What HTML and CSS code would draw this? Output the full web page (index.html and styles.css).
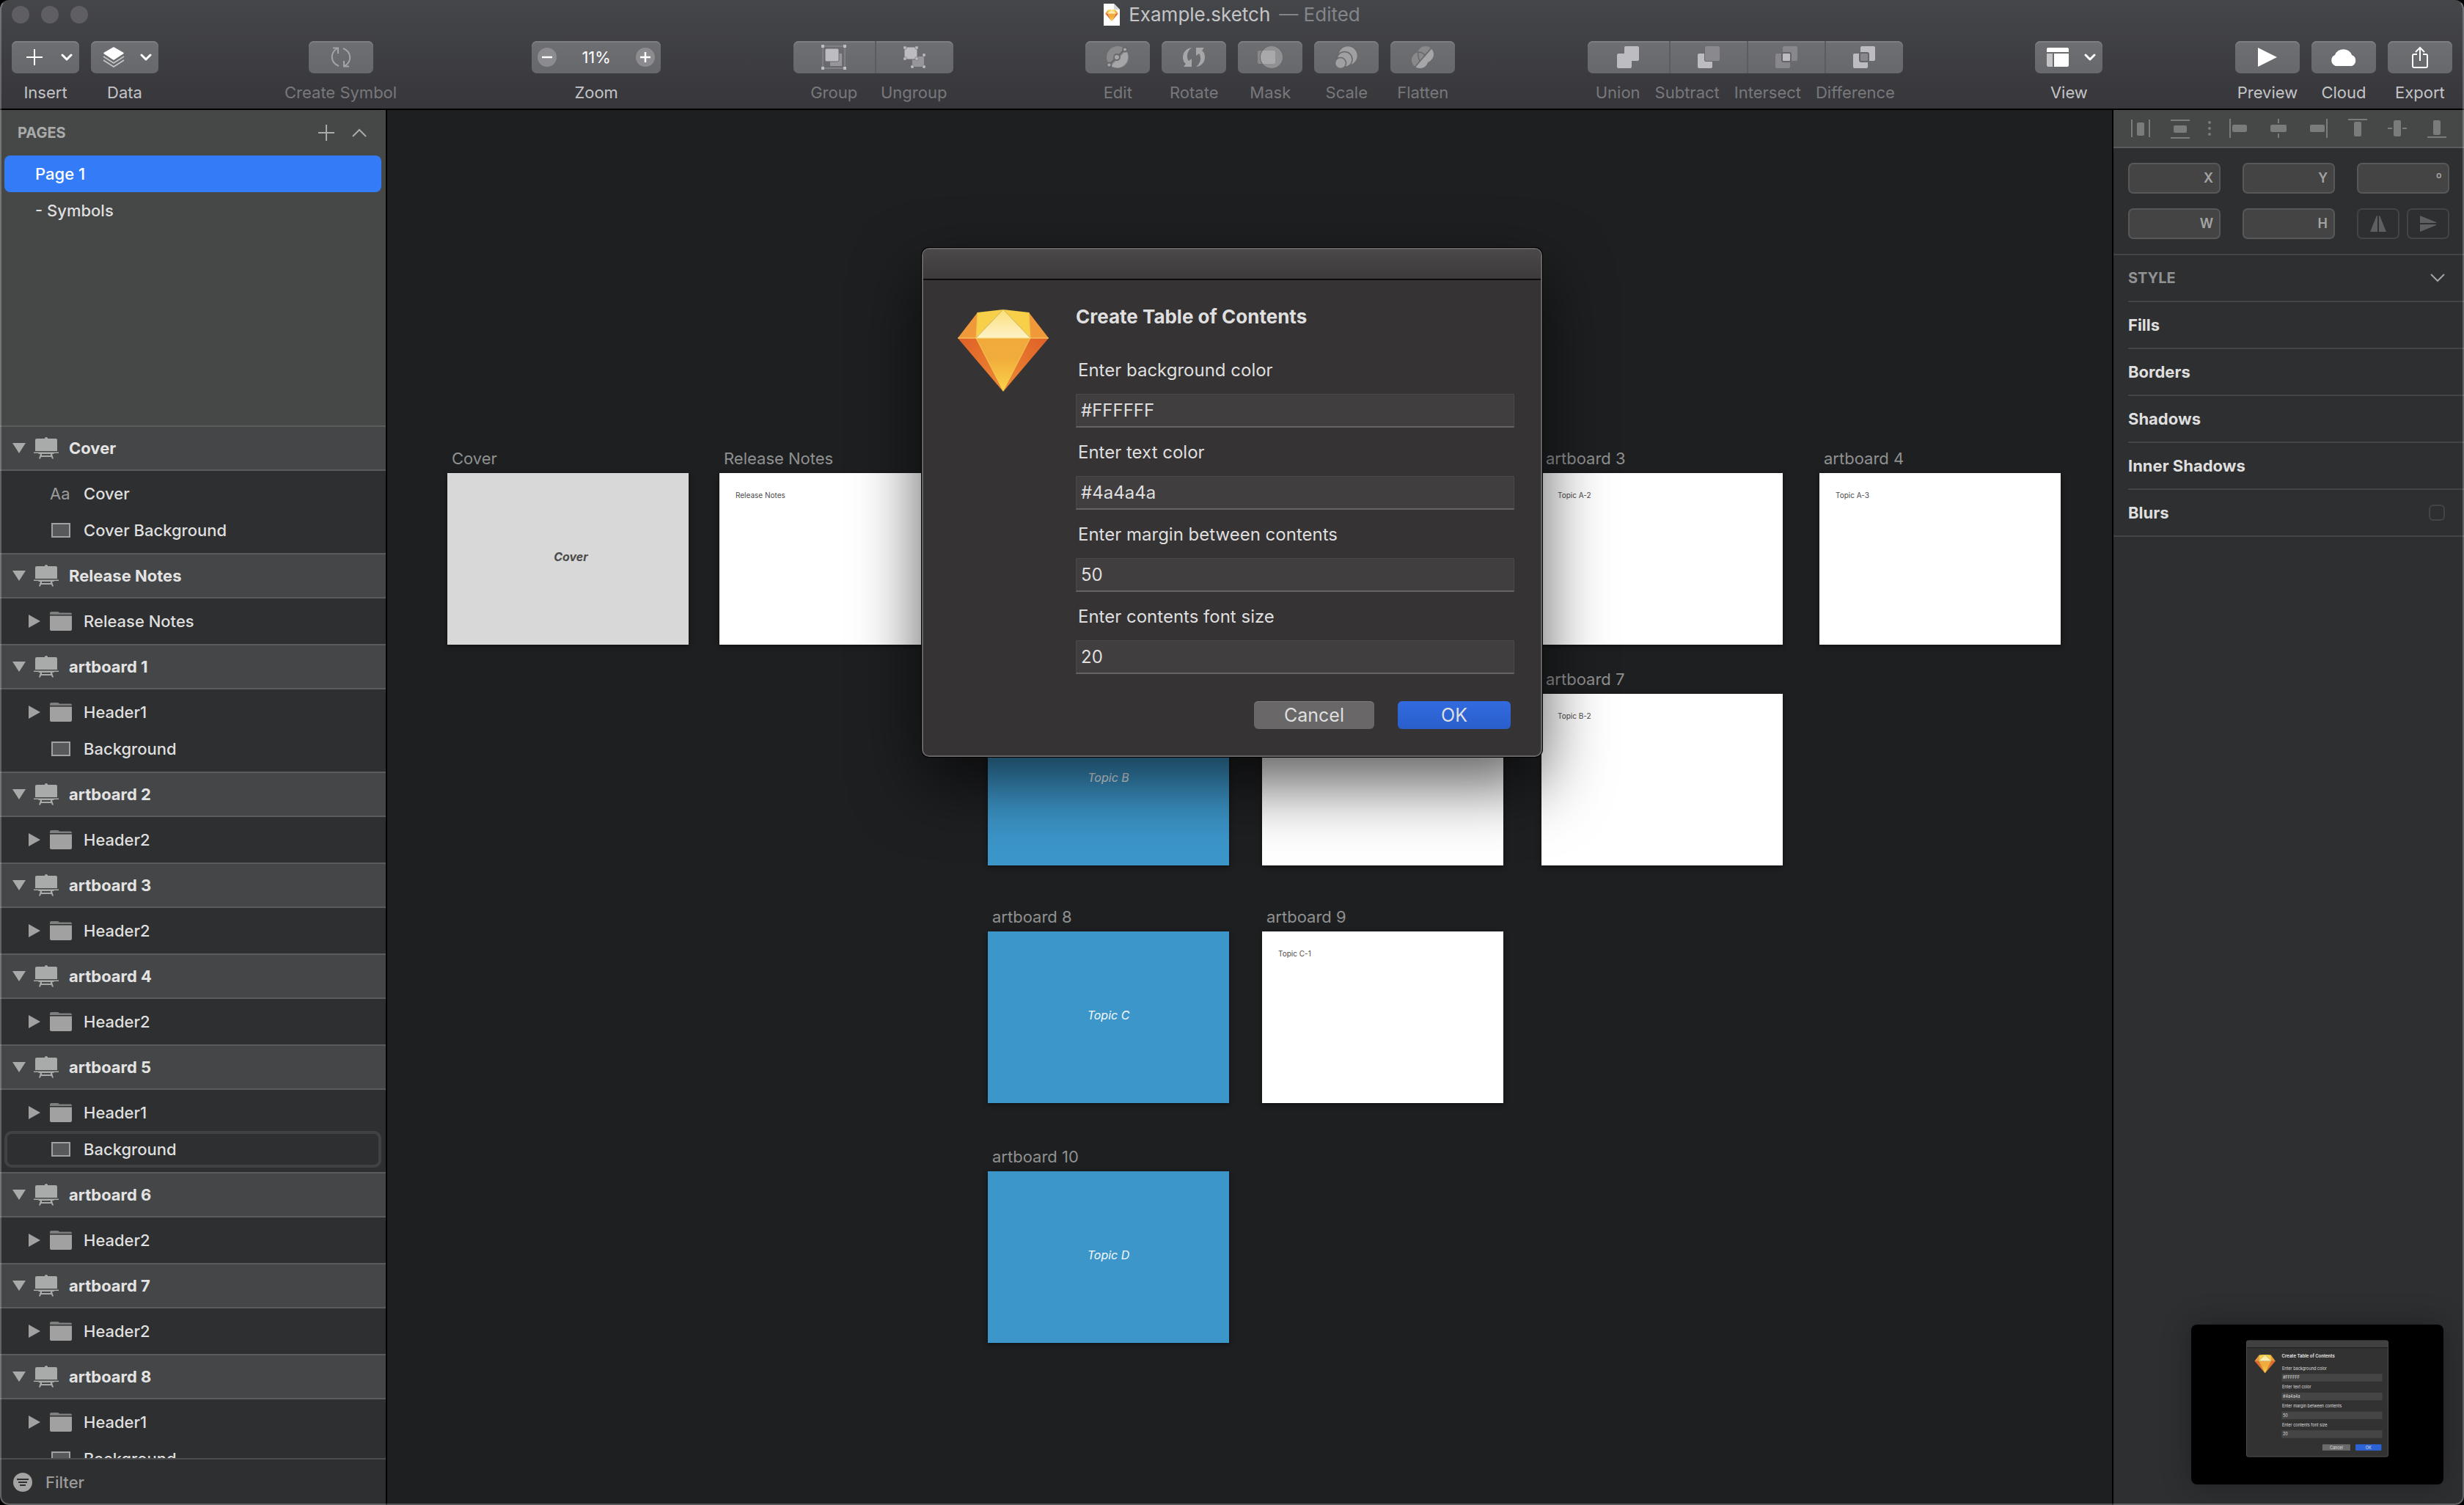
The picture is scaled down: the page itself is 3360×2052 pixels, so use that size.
FILE: index.html
```html
<!DOCTYPE html>
<html lang="en">
<head>
<meta charset="utf-8">
<title>Example.sketch — Edited</title>
<link rel="stylesheet" href="styles.css">
</head>
<body>
<svg class="defs" width="0" height="0" aria-hidden="true">
  <defs>
    <linearGradient id="gem-top" x1="0" y1="0" x2="0" y2="1"><stop offset="0" stop-color="#fbdf7a"/><stop offset="1" stop-color="#fdf2c8"/></linearGradient>
    <linearGradient id="gem-mid" x1="0" y1="0" x2="0" y2="1"><stop offset="0" stop-color="#f0aa3c"/><stop offset=".4" stop-color="#f1ad3c"/><stop offset="1" stop-color="#fad54a"/></linearGradient>
    <linearGradient id="gem-left" x1="0" y1="0" x2="1" y2="1"><stop offset="0" stop-color="#de5f27"/><stop offset="1" stop-color="#ee8a35"/></linearGradient>
    <linearGradient id="gem-right" x1="1" y1="0" x2="0" y2="1"><stop offset="0" stop-color="#de5f27"/><stop offset="1" stop-color="#ee8a35"/></linearGradient>
  </defs>
  <symbol id="gem" viewBox="0 0 124 112">
    <path d="M0 39 27 4 25 39Z" fill="#f0993a"/>
    <path d="M124 39 97 4 99 39Z" fill="#f0993a"/>
    <path d="M27 4 62 0 25 39Z" fill="#f7cf49"/>
    <path d="M97 4 62 0 99 39Z" fill="#f7cf49"/>
    <path d="M62 0 99 39H25Z" fill="url(#gem-top)"/>
    <path d="M0 39H25L62 112Z" fill="url(#gem-left)"/>
    <path d="M124 39H99L62 112Z" fill="url(#gem-right)"/>
    <path d="M25 39H99L62 112Z" fill="url(#gem-mid)"/>
    <path d="M27 4 25 39 62 111 99 39 97 4" fill="none" stroke="#f8c94e" stroke-width="1"/>
    <path d="M0 39H124" stroke="#fbd96e" stroke-width="1"/>
  </symbol>
  <symbol id="down" viewBox="0 0 18 14"><path d="M0 0H18L9 14Z"/></symbol>
  <symbol id="right" viewBox="0 0 16 18"><path d="M0 0 16 9 0 18Z"/></symbol>
  <symbol id="artboard" viewBox="0 0 34 30">
    <path d="M4 2H15V1Q17-1 19 1V2H30Q32 2 32 4V19H2V4Q2 2 4 2ZM0 20.500H34V22H28L27 23H7L6 22H0ZM9 23H11V25H23V23H25L27 29.500H25L24 27H10L9 29.500H7Z"/>
  </symbol>
  <symbol id="folder" viewBox="0 0 30 26">
    <path d="M0 4V2Q0 0 2 0H11Q12 0 13 1.500H29L30 3V4Z" opacity=".7"/>
    <path d="M0 5.500H30V24Q30 26 28 26H2Q0 26 0 24Z"/>
  </symbol>
  <symbol id="shape" viewBox="0 0 26 20"><path d="M1 1H25V19H1Z" fill="#58595a" stroke="#a1a1a1" stroke-width="2"/></symbol>
  <symbol id="chev" viewBox="0 0 16 10"><path d="M2 2 8 8 14 2" fill="none" stroke="#fff" stroke-width="3" stroke-linecap="round" stroke-linejoin="round"/></symbol>
</svg>

<div class="window">
  <header class="toolbar">
    <div class="titlebar">
      <div class="lights"><i></i><i></i><i></i></div>
      <h1 class="title">
        <svg width="22" height="30" viewBox="0 0 22 30"><path d="M0 0H14L22 8V30H0Z" fill="#fff"/><path d="M14 0V8H22Z" fill="#d5d5d5"/><use href="#gem" x="2" y="8" width="18" height="16"/></svg>
        <span>Example.sketch</span> <span class="edited">— Edited</span>
      </h1>
    </div>
    <div class="tools">
      <div class="cluster">
        <button class="tool"><span class="face wide"><svg width="30" height="22" viewBox="-4 0 30 22"><path d="M11 0V22M0 11H22" stroke="#fff" stroke-width="2"/></svg><svg width="16" height="10"><use href="#chev"/></svg></span><span class="label">Insert</span></button>
        <button class="tool"><span class="face wide"><svg width="30" height="28" viewBox="0 0 30 28"><path d="M15 1 28 8.500 15 17 2 8.500Z" fill="#fff" stroke="#fff" stroke-width="1.500" stroke-linejoin="round"/><path d="M1 13 15 22 29 13M1 18 15 27 29 18" fill="none" stroke="#c4c4c6" stroke-width="1.800"/></svg><svg width="16" height="10"><use href="#chev"/></svg></span><span class="label">Data</span></button>
      </div>
      <button class="tool off symbol-tool" disabled><span class="face"><svg width="28" height="28" viewBox="0 0 28 28" fill="none" stroke="#a4a4a7" stroke-width="2"><path d="M11 26C-1 21-1 8 9 2M3 1.500H10V9M17 2C29 7 29 20 19 26M25 26.500H18V19"/></svg></span><span class="label">Create Symbol</span></button>
      <div class="tool">
        <div class="face zoom">
          <button class="round" aria-label="Zoom out"><svg width="14" height="14" viewBox="0 0 14 14"><path d="M0 7H14" stroke="#fff" stroke-width="2.500"/></svg></button>
          <output>11%</output>
          <button class="round" aria-label="Zoom in"><svg width="14" height="14" viewBox="0 0 14 14"><path d="M0 7H14M7 0V14" stroke="#fff" stroke-width="2.500"/></svg></button>
        </div>
        <span class="label">Zoom</span>
      </div>
      <div class="tool off">
        <div class="face segments two">
          <button disabled aria-labelledby="t-group"><svg width="34" height="34" viewBox="0 0 34 34"><path d="M2 2H32V32H2Z" fill="none" stroke="#86868a" stroke-width="1.500"/><path d="M12 12H28V29H12Z" fill="#97979b"/><rect x="5" y="5" width="19" height="18" rx="2" fill="#bcbcc1" stroke="#6a6a6e"/><path d="M0 0H4V4H0ZM30 0H34V4H30ZM0 30H4V34H0ZM30 30H34V34H30Z" fill="#bcbcc1"/></svg></button>
          <button disabled aria-labelledby="t-ungroup"><svg width="30" height="30" viewBox="0 0 30 30"><path d="M12 14H28V28H12Z" fill="#97979b"/><rect x="1" y="1" width="18" height="17" rx="4" fill="#bcbcc1" stroke="#6a6a6e"/><path d="M0 0H4V4H0ZM16 0H20V4H16ZM0 15H4V19H0ZM16 15H20V19H16ZM26 10H30V14H26ZM26 26H30V30H26ZM10 26H14V30H10Z" fill="#bcbcc1" stroke="#6a6a6e" stroke-width=".500"/></svg></button>
        </div>
        <div class="labels two"><span class="label" id="t-group">Group</span><span class="label" id="t-ungroup">Ungroup</span></div>
      </div>
      <div class="cluster">
        <button class="tool off" disabled><span class="face"><svg width="30" height="30" viewBox="0 0 30 30"><circle cx="15" cy="15" r="15" fill="#89898c"/><path d="M26.500 6A15 15 0 0 1 6 27Z" fill="#a6a6a8"/><path d="M3 26 25 4" stroke="#68686c" stroke-width="2.500"/><g fill="#a6a6a8" stroke="#68686c" stroke-width="1.800"><circle cx="25" cy="4.500" r="3"/><circle cx="14" cy="15" r="4"/><circle cx="3.500" cy="25.500" r="3"/></g></svg></span><span class="label">Edit</span></button>
        <button class="tool off" disabled><span class="face"><svg width="30" height="26" viewBox="0 0 30 26" fill="#a6a6a8"><path id="turn" d="M12 0C4 1 0 7 0 13C0 17 1 20 4 22L1 26H12V15L8 18C4 13 6 4 12 0Z"/><use href="#turn" transform="rotate(180 15 13)"/></svg></span><span class="label">Rotate</span></button>
        <button class="tool off" disabled><span class="face"><svg width="34" height="30" viewBox="0 0 34 30"><rect y="6" width="24" height="18" rx="2" fill="#89898c"/><circle cx="19" cy="15" r="16" fill="#68686c"/><circle cx="19" cy="15" r="15" fill="#919194"/><path d="M7 6H22Q24 6 24 8V22Q24 24 22 24H7Q1 15 7 6Z" fill="#a9a9ab"/></svg></span><span class="label">Mask</span></button>
        <button class="tool off" disabled><span class="face"><svg width="30" height="30" viewBox="0 0 30 30" fill="#a0a0a2" stroke="#68686c" stroke-width="1.500"><circle cx="17" cy="13" r="13.500"/><circle cx="12.500" cy="18" r="10.500"/><circle cx="7" cy="23" r="7.500"/></svg></span><span class="label">Scale</span></button>
        <button class="tool off" disabled><span class="face"><svg width="30" height="30" viewBox="0 0 30 30"><g fill="#89898c"><circle cx="19" cy="11" r="11"/><circle cx="11" cy="19" r="11"/></g><path d="M9 8Q18 8 20 17M9 8Q8 13 11 20" fill="none" stroke="#68686c" stroke-width="1.500"/><path d="M27.500 4Q32 11 28 17Q26 20 22 22Q20 29 12 30Q8 30 5 28Z" fill="#a6a6a8"/><path d="M4 29 27 2" stroke="#68686c" stroke-width="1.500"/></svg></span><span class="label">Flatten</span></button>
      </div>
      <div class="tool off">
        <div class="face segments four">
          <button disabled aria-labelledby="t-union"><svg width="30" height="30" viewBox="0 0 30 30" fill="#bcbcc1"><rect x="10" width="20" height="20" rx="2"/><rect y="10" width="20" height="20" rx="2"/></svg></button>
          <button disabled aria-labelledby="t-subtract"><svg width="30" height="30" viewBox="0 0 30 30"><rect y="10" width="20" height="20" rx="2" fill="#bcbcc1"/><rect x="9" y="-1" width="22" height="22" rx="2" fill="#6a6a6e"/><rect x="10" width="20" height="20" rx="2" fill="#8a8a8e"/></svg></button>
          <button disabled aria-labelledby="t-intersect"><svg width="30" height="30" viewBox="0 0 30 30"><g fill="#88888c"><rect x="10" width="20" height="20" rx="2"/><rect y="10" width="20" height="20" rx="2"/></g><rect x="9" y="9" width="12" height="12" rx="2" fill="#bcbcc1" stroke="#66666a" stroke-width="2"/></svg></button>
          <button disabled aria-labelledby="t-difference"><svg width="30" height="30" viewBox="0 0 30 30"><g fill="#bcbcc1"><rect x="10" width="20" height="20" rx="2"/><rect y="10" width="20" height="20" rx="2"/></g><rect x="9" y="9" width="12" height="12" rx="2" fill="#88888c" stroke="#66666a" stroke-width="2"/></svg></button>
        </div>
        <div class="labels"><span class="label" id="t-union">Union</span><span class="label" id="t-subtract">Subtract</span><span class="label" id="t-intersect">Intersect</span><span class="label" id="t-difference">Difference</span></div>
      </div>
      <button class="tool"><span class="face wide"><svg width="30" height="26" viewBox="0 0 30 26"><path d="M2 0H28Q30 0 30 2V6H0V2Q0 0 2 0ZM10 8H30V24Q30 26 28 26H10Z" fill="#fff"/><path d="M0 8H8V26H2Q0 26 0 24Z" fill="#c4c4c6"/></svg><svg width="16" height="10"><use href="#chev"/></svg></span><span class="label">View</span></button>
      <div class="cluster">
        <button class="tool"><span class="face"><svg width="26" height="26" viewBox="0 0 26 26"><path d="M0 0 26 13 0 26Z" fill="#fff"/></svg></span><span class="label">Preview</span></button>
        <button class="tool"><span class="face"><svg width="38" height="26" viewBox="0 0 38 26"><path d="M8 25A8 8 0 0 1 7 10A12 11 0 0 1 30 10A8 8 0 0 1 30 25Z" fill="#fff"/></svg></span><span class="label">Cloud</span></button>
        <button class="tool"><span class="face"><svg width="22" height="30" viewBox="0 0 22 30" fill="none" stroke="#fff" stroke-width="2"><path d="M7 11H3Q1 11 1 13V27Q1 29 3 29H19Q21 29 21 27V13Q21 11 19 11H15M11 20V2M5 8 11 2 17 8"/></svg></span><span class="label">Export</span></button>
      </div>
    </div>
  </header>

  <main class="workspace">
    <aside class="sidebar">
      <nav class="pages">
        <div class="pages-head">
          <h2>PAGES</h2>
          <button aria-label="Add page"><svg width="22" height="22" viewBox="0 0 22 22"><path d="M11 0V22M0 11H22" stroke="#a9aaaa" stroke-width="2"/></svg></button>
          <button aria-label="Collapse pages"><svg width="20" height="12" viewBox="0 0 20 12"><path d="M1 11 10 2 19 11" fill="none" stroke="#a9aaaa" stroke-width="2"/></svg></button>
        </div>
        <a class="page current" href="#page-1">Page 1</a>
        <a class="page" href="#symbols">- Symbols</a>
      </nav>
      <div class="layers">
        <section>
          <h3><svg class="tri" width="18" height="14"><use href="#down"/></svg><svg width="34" height="30"><use href="#artboard"/></svg>Cover</h3>
          <ul>
            <li><span class="aa">Aa</span>Cover</li>
            <li><svg class="shape" width="26" height="20"><use href="#shape"/></svg>Cover Background</li>
          </ul>
        </section>
        <section>
          <h3><svg class="tri" width="18" height="14"><use href="#down"/></svg><svg width="34" height="30"><use href="#artboard"/></svg>Release Notes</h3>
          <ul>
            <li><svg class="fold" width="16" height="18"><use href="#right"/></svg><svg width="30" height="26"><use href="#folder"/></svg>Release Notes</li>
          </ul>
        </section>
        <section>
          <h3><svg class="tri" width="18" height="14"><use href="#down"/></svg><svg width="34" height="30"><use href="#artboard"/></svg>artboard 1</h3>
          <ul>
            <li><svg class="fold" width="16" height="18"><use href="#right"/></svg><svg width="30" height="26"><use href="#folder"/></svg>Header1</li>
            <li><svg class="shape" width="26" height="20"><use href="#shape"/></svg>Background</li>
          </ul>
        </section>
        <section>
          <h3><svg class="tri" width="18" height="14"><use href="#down"/></svg><svg width="34" height="30"><use href="#artboard"/></svg>artboard 2</h3>
          <ul>
            <li><svg class="fold" width="16" height="18"><use href="#right"/></svg><svg width="30" height="26"><use href="#folder"/></svg>Header2</li>
          </ul>
        </section>
        <section>
          <h3><svg class="tri" width="18" height="14"><use href="#down"/></svg><svg width="34" height="30"><use href="#artboard"/></svg>artboard 3</h3>
          <ul>
            <li><svg class="fold" width="16" height="18"><use href="#right"/></svg><svg width="30" height="26"><use href="#folder"/></svg>Header2</li>
          </ul>
        </section>
        <section>
          <h3><svg class="tri" width="18" height="14"><use href="#down"/></svg><svg width="34" height="30"><use href="#artboard"/></svg>artboard 4</h3>
          <ul>
            <li><svg class="fold" width="16" height="18"><use href="#right"/></svg><svg width="30" height="26"><use href="#folder"/></svg>Header2</li>
          </ul>
        </section>
        <section>
          <h3><svg class="tri" width="18" height="14"><use href="#down"/></svg><svg width="34" height="30"><use href="#artboard"/></svg>artboard 5</h3>
          <ul>
            <li><svg class="fold" width="16" height="18"><use href="#right"/></svg><svg width="30" height="26"><use href="#folder"/></svg>Header1</li>
            <li class="hovered"><svg class="shape" width="26" height="20"><use href="#shape"/></svg>Background</li>
          </ul>
        </section>
        <section>
          <h3><svg class="tri" width="18" height="14"><use href="#down"/></svg><svg width="34" height="30"><use href="#artboard"/></svg>artboard 6</h3>
          <ul>
            <li><svg class="fold" width="16" height="18"><use href="#right"/></svg><svg width="30" height="26"><use href="#folder"/></svg>Header2</li>
          </ul>
        </section>
        <section>
          <h3><svg class="tri" width="18" height="14"><use href="#down"/></svg><svg width="34" height="30"><use href="#artboard"/></svg>artboard 7</h3>
          <ul>
            <li><svg class="fold" width="16" height="18"><use href="#right"/></svg><svg width="30" height="26"><use href="#folder"/></svg>Header2</li>
          </ul>
        </section>
        <section>
          <h3><svg class="tri" width="18" height="14"><use href="#down"/></svg><svg width="34" height="30"><use href="#artboard"/></svg>artboard 8</h3>
          <ul>
            <li><svg class="fold" width="16" height="18"><use href="#right"/></svg><svg width="30" height="26"><use href="#folder"/></svg>Header1</li>
            <li><svg class="shape" width="26" height="20"><use href="#shape"/></svg>Background</li>
          </ul>
        </section>
      </div>
      <label class="filter">
        <svg width="26" height="26" viewBox="0 0 26 26"><circle cx="13" cy="13" r="13" fill="#a4a4a4"/><path d="M5 9H21M7 13H19M9 17H17" stroke="#2e2f30" stroke-width="2"/></svg>
        <input type="text" placeholder="Filter" aria-label="Filter layers">
      </label>
    </aside>

    <section class="canvas" aria-label="Canvas">
      <figure class="board b-cover"><figcaption>Cover</figcaption><div class="sheet grey"><strong>Cover</strong></div></figure>
      <figure class="board b-notes"><figcaption>Release Notes</figcaption><div class="sheet"><small>Release Notes</small></div></figure>
      <figure class="board b-3"><figcaption>artboard 3</figcaption><div class="sheet"><small>Topic A-2</small></div></figure>
      <figure class="board b-4"><figcaption>artboard 4</figcaption><div class="sheet"><small>Topic A-3</small></div></figure>
      <figure class="board b-5"><div class="sheet blue"><em>Topic B</em></div></figure>
      <figure class="board b-6"><div class="sheet"></div></figure>
      <figure class="board b-7"><figcaption>artboard 7</figcaption><div class="sheet"><small>Topic B-2</small></div></figure>
      <figure class="board b-8"><figcaption>artboard 8</figcaption><div class="sheet blue"><em>Topic C</em></div></figure>
      <figure class="board b-9"><figcaption>artboard 9</figcaption><div class="sheet"><small>Topic C-1</small></div></figure>
      <figure class="board b-10"><figcaption>artboard 10</figcaption><div class="sheet blue"><em>Topic D</em></div></figure>
    </section>

    <aside class="inspector">
      <div class="align">
        <button aria-label="Distribute horizontally"><svg width="30" height="28" viewBox="0 0 30 28"><path class="ln" d="M3 2V26M27 2V26"/><rect x="10" y="6" width="10" height="18" rx="2"/></svg></button>
        <button aria-label="Distribute vertically"><svg width="30" height="28" viewBox="0 0 30 28"><path class="ln" d="M2 3H28M2 27H28"/><rect x="6" y="10" width="18" height="10" rx="2"/></svg></button>
        <svg class="dots" width="4" height="20" viewBox="0 0 4 20"><circle cx="2" cy="2" r="2"/><circle cx="2" cy="10" r="2"/><circle cx="2" cy="18" r="2"/></svg>
        <button aria-label="Align left"><svg width="30" height="28" viewBox="0 0 30 28"><path class="ln" d="M3 1V27"/><rect x="6" y="9" width="20" height="10" rx="2"/></svg></button>
        <button aria-label="Align center"><svg width="30" height="28" viewBox="0 0 30 28"><path class="ln" d="M15 1V7M15 21V27"/><rect x="4" y="9" width="22" height="10" rx="2"/></svg></button>
        <button aria-label="Align right"><svg width="30" height="28" viewBox="0 0 30 28"><path class="ln" d="M27 1V27"/><rect x="4" y="9" width="20" height="10" rx="2"/></svg></button>
        <button aria-label="Align top"><svg width="30" height="28" viewBox="0 0 30 28"><path class="ln" d="M2 2H28"/><rect x="10" y="5" width="10" height="20" rx="2"/></svg></button>
        <button aria-label="Align middle"><svg width="30" height="28" viewBox="0 0 30 28"><path class="ln" d="M2 14H8M22 14H28"/><rect x="10" y="3" width="10" height="22" rx="2"/></svg></button>
        <button aria-label="Align bottom"><svg width="30" height="28" viewBox="0 0 30 28"><path class="ln" d="M2 26H28"/><rect x="10" y="3" width="10" height="20" rx="2"/></svg></button>
      </div>
      <div class="geometry">
        <label class="field"><input type="text"><span>X</span></label>
        <label class="field"><input type="text"><span>Y</span></label>
        <label class="field"><input type="text"><span>º</span></label>
        <label class="field"><input type="text"><span>W</span></label>
        <label class="field"><input type="text"><span>H</span></label>
        <div class="flips">
          <button aria-label="Flip horizontally"><svg width="22" height="22" viewBox="0 0 22 22"><path d="M0 22H10V0H9ZM12 0V22H22L13 0Z"/></svg></button>
          <button aria-label="Flip vertically"><svg width="22" height="22" viewBox="0 0 22 22"><path d="M0 0V10H22V9ZM0 12V22L22 13V12Z"/></svg></button>
        </div>
      </div>
      <div class="style">
        <div class="row"><h2>STYLE</h2><button aria-label="Collapse style"><svg width="20" height="12" viewBox="0 0 20 12"><path d="M1 1 10 10 19 1" fill="none" stroke="#a4a4a4" stroke-width="2"/></svg></button></div>
        <div class="row"><h3>Fills</h3></div>
        <div class="row"><h3>Borders</h3></div>
        <div class="row"><h3>Shadows</h3></div>
        <div class="row"><h3>Inner Shadows</h3></div>
        <div class="row"><h3><label for="blurs">Blurs</label></h3><input id="blurs" type="checkbox"></div>
      </div>
    </aside>
  </main>

  <form class="dialog" role="dialog" aria-labelledby="dialog-title">
    <div class="dialog-bar"></div>
    <div class="dialog-body">
      <svg class="logo" width="124" height="112"><use href="#gem"/></svg>
      <div class="fields">
        <h2 id="dialog-title">Create Table of Contents</h2>
        <label for="f-bg">Enter background color</label>
        <input id="f-bg" type="text" value="#FFFFFF">
        <label for="f-text">Enter text color</label>
        <input id="f-text" type="text" value="#4a4a4a">
        <label for="f-margin">Enter margin between contents</label>
        <input id="f-margin" type="text" value="50">
        <label for="f-size">Enter contents font size</label>
        <input id="f-size" type="text" value="20">
        <div class="actions"><button type="button">Cancel</button><button type="button" class="ok">OK</button></div>
      </div>
    </div>
  </form>

  <div class="preview">
    <svg width="194" height="160" viewBox="0 0 846 694" role="img" aria-label="Screenshot preview">
      <rect x="2" y="2" width="842" height="690" rx="10" fill="#323232" stroke="#555" stroke-width="4"/>
      <path d="M4 44V12Q4 4 12 4H834Q842 4 842 12V44Z" fill="#414141"/>
      <path d="M4 44H842" stroke="#191919" stroke-width="4"/>
      <use href="#gem" x="50" y="84" width="124" height="112"/>
      <g fill="#454545"><rect x="211" y="199" width="598" height="46"/><rect x="211" y="311" width="598" height="46"/><rect x="211" y="423" width="598" height="46"/><rect x="211" y="535" width="598" height="46"/></g>
      <g class="mini-text">
        <text class="b" x="212" y="104">Create Table of Contents</text>
        <text x="214" y="176">Enter background color</text><text x="218" y="231">#FFFFFF</text>
        <text x="214" y="288">Enter text color</text><text x="218" y="343">#4a4a4a</text>
        <text x="214" y="400">Enter margin between contents</text><text x="218" y="455">50</text>
        <text x="214" y="512">Enter contents font size</text><text x="218" y="567">20</text>
      </g>
      <rect x="453" y="618" width="166" height="38" rx="4" fill="#6b6b6b"/><rect x="650" y="618" width="154" height="38" rx="4" fill="#2c63d6"/>
      <g class="mini-text mid"><text x="536" y="646">Cancel</text><text x="727" y="646">OK</text></g>
    </svg>
  </div>
</div>
</body>
</html>
```
FILE: styles.css
```css
* { box-sizing: border-box; }
html { background: #000; }
body {
  margin: 0;
  font: 22px/28px Inter, "Liberation Sans", sans-serif;
  color: #dfdfdf;
}
h1, h2, h3, ul, figure { margin: 0; padding: 0; }
button { font: inherit; color: inherit; background: none; border: 0; padding: 0; }
svg { display: block; flex: none; }
.defs { position: absolute; }

.window {
  position: relative;
  display: flex;
  flex-direction: column;
  height: 100vh;
  border-radius: 12px;
  overflow: hidden;
}
.window::after {
  content: "";
  position: absolute;
  inset: 0;
  border: 2px solid rgba(255, 255, 255, .25);
  border-top-color: transparent;
  border-radius: 12px;
  pointer-events: none;
}

/* toolbar */
.toolbar {
  flex: none;
  background: linear-gradient(#45464a, #37373b);
  border-bottom: 2px solid #000;
  padding-bottom: 8px;
}
.titlebar {
  display: grid;
  grid-template-columns: 1fr auto 1fr;
  height: 40px;
  align-items: center;
  margin-bottom: 16px;
}
.lights { display: flex; gap: 16px; padding-left: 16px; }
.lights i { width: 24px; height: 24px; border-radius: 50%; background: #5f5f63; }
.title {
  display: flex;
  align-items: center;
  gap: 12px;
  font-size: 26px;
  font-weight: 400;
  color: #c4c5c7;
}
.edited { color: #848589; }
.tools {
  display: flex;
  justify-content: space-between;
  align-items: flex-start;
  padding: 0 16px;
}
.cluster { display: flex; gap: 16px; }
.tool {
  display: flex;
  flex-direction: column;
  align-items: center;
  gap: 12px;
  color: #c3c4c6;
}
.symbol-tool { width: 160px; margin-left: -12px; }
.label { line-height: 28px; white-space: nowrap; }
.cluster .label { width: 0; display: flex; justify-content: center; }
.off { color: #77787c; }
.face {
  display: flex;
  align-items: center;
  justify-content: center;
  width: 88px;
  height: 44px;
  border-radius: 7px;
  background: linear-gradient(#6e6f73, #67686c);
  box-shadow: inset 0 2px #7d7e82;
}
.face.wide { width: 92px; padding: 0 9px 0 16px; justify-content: space-between; }
.face.zoom { width: 176px; justify-content: space-between; padding: 0 8px; color: #fff; }
.round {
  display: grid;
  place-items: center;
  width: 26px;
  height: 26px;
  border-radius: 50%;
  background: #8c8c90;
}
.segments { display: grid; justify-items: stretch; }
.segments button { display: grid; place-items: center; height: 44px; }
.segments button + button { border-left: 2px solid #5b5c60; }
.two { width: 218px; grid-template-columns: 111px 107px; }
.four { width: 430px; grid-template-columns: 111px 106px 106px 107px; }
.labels { display: flex; gap: 20px; }
.labels.two { display: grid; gap: 0; justify-items: center; }

/* workspace */
.workspace { flex: 1; display: flex; min-height: 0; }
.sidebar {
  flex: none;
  display: flex;
  flex-direction: column;
  width: 528px;
  border-right: 2px solid #000;
  background: #2e2f30;
  font-weight: 500;
}
.pages { flex: none; height: 430px; padding: 0 6px; background: #464747; }
.pages-head { display: flex; align-items: center; height: 62px; padding: 0 20px 0 18px; }
.pages-head h2 { flex: 1; font-size: 20px; color: #a9aaaa; font-weight: 700; }
.pages-head button + button { margin-left: 24px; }
.page {
  display: block;
  padding: 11px 42px;
  border-radius: 8px;
  color: inherit;
  text-decoration: none;
}
.page.current { background: #347bf7; color: #fff; }
.layers { flex: 1; min-height: 0; overflow: hidden; }
.layers h3 {
  display: flex;
  align-items: center;
  height: 62px;
  padding-left: 17px;
  border: solid #5a5b5c;
  border-width: 2px 0;
  background: #454647;
  font-size: 22px;
  font-weight: 700;
  fill: #a9aaaa;
  color: #e3e3e3;
}
.layers h3 .tri { margin-right: 11px; }
.layers h3 svg + svg { margin-right: 14px; }
.layers ul { list-style: none; padding: 6px; }
.layers li {
  display: flex;
  align-items: center;
  height: 50px;
  padding-left: 62px;
  fill: #a1a1a1;
}
.layers li svg { margin-right: 16px; }
.layers li .fold { margin: 0 13px 0 -29px; }
.layers li .shape { margin: 0 18px 0 2px; }
.layers li.hovered { border: 4px solid #414243; border-radius: 10px; padding-left: 58px; }
.aa { width: 46px; color: #9b9b9b; font-weight: 400; }
.filter {
  display: flex;
  align-items: center;
  gap: 18px;
  height: 64px;
  padding-left: 18px;
  border-top: 2px solid #4b4c4d;
}
.filter input { flex: 1; min-width: 0; background: none; border: 0; padding: 0; font: inherit; color: inherit; }
.filter input::placeholder { color: #9b9b9b; opacity: 1; }

/* canvas */
.canvas { flex: 1; position: relative; overflow: hidden; background: #1e1f21; }
.board { position: absolute; width: 329px; }
.board figcaption {
  position: absolute;
  left: 6px;
  bottom: 100%;
  padding-bottom: 6px;
  color: #8f9090;
  white-space: nowrap;
}
.sheet {
  display: flex;
  align-items: center;
  justify-content: center;
  height: 234px;
  background: #fff;
  color: #4a4a4a;
  box-shadow: 0 2px 6px rgba(0, 0, 0, .5);
}
.sheet.grey { background: #d8d8d8; }
.sheet.blue { background: #3c96ca; color: #f4f9fc; }
.sheet small { align-self: flex-start; margin: 22px auto 0 22px; font-size: 10px; line-height: 16px; }
.sheet em, .sheet strong { font-size: 16px; font-style: italic; padding-bottom: 6px; }
.sheet strong { padding-left: 8px; }
.b-cover { left: 82px; top: 495px; }
.b-notes { left: 453px; top: 495px; }
.b-3 { left: 1574px; top: 495px; }
.b-4 { left: 1953px; top: 495px; }
.b-5 { left: 819px; top: 796px; }
.b-6 { left: 1193px; top: 796px; }
.b-7 { left: 1574px; top: 796px; }
.b-8 { left: 819px; top: 1120px; }
.b-9 { left: 1193px; top: 1120px; }
.b-10 { left: 819px; top: 1447px; }

/* inspector */
.inspector { flex: none; width: 480px; border-left: 2px solid #000; background: #2e2f31; }
.align {
  display: flex;
  align-items: center;
  gap: 24px;
  height: 52px;
  padding-left: 22px;
  background: #464747;
  border-bottom: 2px solid #5a5b5c;
  fill: #7a7b7b;
}
.align .dots { margin: 0 -1px; }
.ln { fill: none; stroke: #7a7b7b; stroke-width: 2; }
.geometry {
  display: grid;
  grid-template-columns: repeat(3, minmax(0, 1fr));
  gap: 20px 30px;
  padding: 20px;
  border-bottom: 2px solid #434445;
}
.field {
  display: flex;
  align-items: center;
  height: 42px;
  padding: 0 8px;
  background: #444445;
  border: 2px solid #575859;
  border-radius: 7px;
  font-size: 18px;
  font-weight: 600;
  color: #a4a4a4;
}
.field input { flex: 1; width: 0; min-width: 0; padding: 0; background: none; border: 0; color: inherit; font: inherit; }
.flips { display: grid; grid-template-columns: 1fr 1fr; gap: 10px; }
.flips button {
  display: grid;
  place-items: center;
  border: 2px solid #434445;
  border-radius: 7px;
  fill: #5e5f60;
}
.style { border-bottom: 2px solid #434445; }
.row {
  display: flex;
  align-items: center;
  justify-content: space-between;
  height: 64px;
  margin-left: 20px;
  padding-right: 26px;
  border-bottom: 2px solid #434445;
}
.row:last-child { height: 62px; border: 0; }
.row h2 { font-size: 20px; font-weight: 700; color: #929293; }
.row h3 { font-size: 22px; font-weight: 700; }
.row input {
  appearance: none;
  width: 22px;
  height: 22px;
  margin: 0;
  border: 2px solid #434445;
  border-radius: 6px;
}

/* dialog */
.dialog {
  position: absolute;
  top: 338px;
  left: 0;
  right: 0;
  width: 846px;
  margin: 0 auto;
  border: 2px solid #656364;
  border-radius: 10px;
  background: #353334;
  box-shadow: 0 0 0 1px #000, 0 36px 90px rgba(0, 0, 0, .65);
  font-size: 24px;
  line-height: 32px;
}
.dialog-bar {
  height: 42px;
  border-bottom: 2px solid #0c0c0c;
  border-radius: 8px 8px 0 0;
  background: linear-gradient(#4a4849, #3c3a3b);
}
.dialog-body { display: flex; gap: 37px; padding: 34px 36px 36px 47px; }
.logo { margin-top: 6px; }
.fields { flex: 1; display: flex; flex-direction: column; }
.fields h2 { font-size: 26px; font-weight: 700; line-height: 32px; margin-bottom: 41px; }
.fields label { padding-left: 3px; margin-bottom: 16px; }
.fields input {
  height: 46px;
  margin: 0 0 18px;
  padding: 0 6px;
  border: 1px solid #4a4849;
  border-bottom: 2px solid #656364;
  background: #403e3f;
  color: inherit;
  font: inherit;
}
.actions { display: flex; justify-content: flex-end; gap: 32px; padding: 19px 5px 0 0; }
.actions button {
  width: 164px;
  height: 38px;
  border-radius: 6px;
  background: #696768;
  box-shadow: inset 0 1px #7f7d7e;
  font-size: 25px;
}
.actions .ok { width: 154px; background: linear-gradient(#326be0, #295ecb); box-shadow: none; }

/* floating screenshot preview */
.preview {
  position: absolute;
  right: 28px;
  bottom: 28px;
  width: 344px;
  height: 218px;
  padding-top: 21px;
  border-radius: 8px;
  background: #000;
  box-shadow: 0 0 40px rgba(0, 0, 0, .3);
}
.preview svg { margin: 0 auto; }
.mini-text { font-size: 24px; fill: #dfdfdf; }
.mini-text .b { font-size: 26px; font-weight: 700; }
.mid { text-anchor: middle; }
```
